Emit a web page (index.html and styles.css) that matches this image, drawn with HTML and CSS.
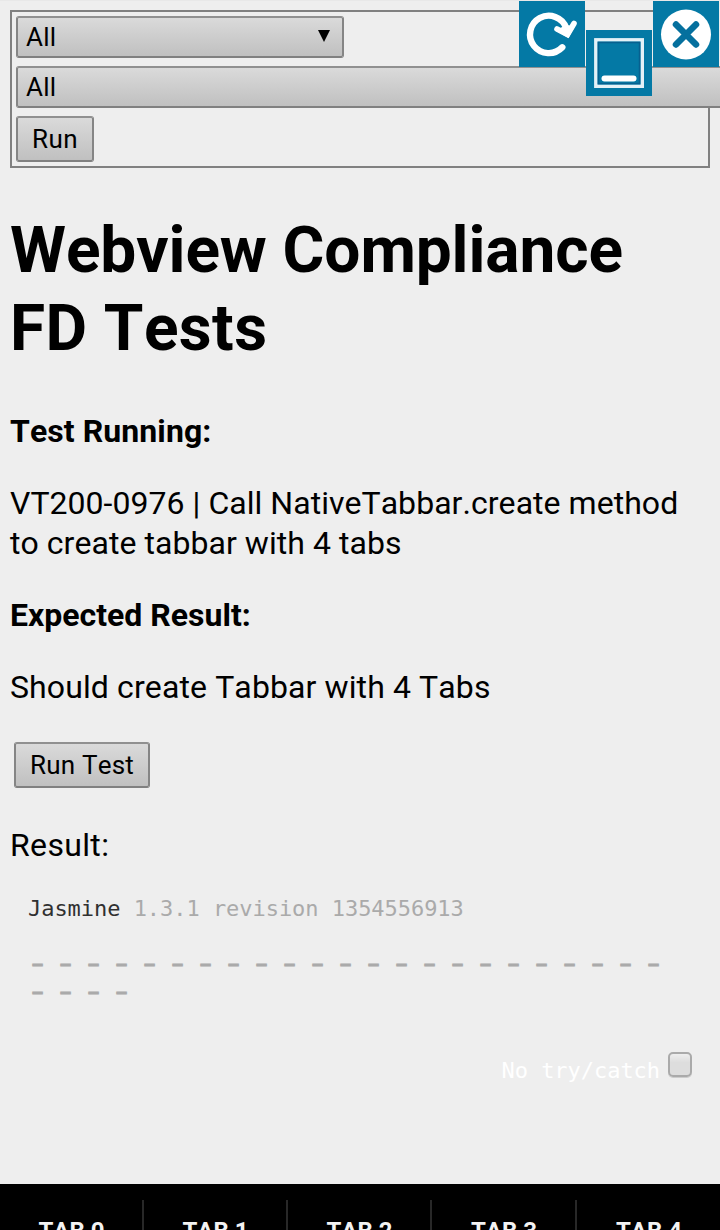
FILE: index.html
```html
<!DOCTYPE html>
<html lang="en">
<head>
<meta charset="utf-8">
<title>Webview Compliance FD Tests</title>
<link rel="stylesheet" href="styles.css">
</head>
<body>
<main class="page">
  <section class="filters">
    <div class="control select select-short"><span>All</span><svg class="arrow" viewBox="0 0 12 12"><path d="M0 0H12L6 12Z"/></svg></div>
    <div class="control select select-long"><span>All</span></div>
    <button class="control button run">Run</button>
  </section>
  <h1 class="title"><span class="title-a">Webview Compliance</span><br><span class="title-b">FD Tests</span></h1>
  <h2 class="label label-test">Test Running:</h2>
  <p class="text"><span class="line-a">VT200-0976 | Call NativeTabbar.create method</span><br><span class="line-b">to create tabbar with 4 tabs</span></p>
  <h2 class="label label-expected">Expected Result:</h2>
  <p class="text"><span class="line-c">Should create Tabbar with 4 Tabs</span></p>
  <button class="control button run-test">Run Test</button>
  <p class="text result">Result:</p>
  <section class="reporter">
    <div class="banner">Jasmine <span class="version">1.3.1 revision 1354556913</span></div>
    <ul class="symbols">
      <li>–</li><li>–</li><li>–</li><li>–</li><li>–</li><li>–</li><li>–</li><li>–</li><li>–</li>
      <li>–</li><li>–</li><li>–</li><li>–</li><li>–</li><li>–</li><li>–</li><li>–</li><li>–</li>
      <li>–</li><li>–</li><li>–</li><li>–</li><li>–</li><li>–</li><li>–</li><li>–</li><li>–</li>
    </ul>
    <div class="options"><span>No try/catch</span><span class="checkbox"></span></div>
  </section>
</main>
<nav class="tabs">
  <div class="tab">TAB 0</div><div class="tab">TAB 1</div><div class="tab">TAB 2</div><div class="tab">TAB 3</div><div class="tab">TAB 4</div>
</nav>
<div class="overlay">
  <svg class="tool" viewBox="0 0 66 66"><rect width="66" height="66" fill="#0479a5"/><path d="M43.300 46.300A18.700 18.700 0 1 1 47.300 27" fill="none" stroke="#fff" stroke-width="6.400" stroke-linecap="round"/><path d="M38 28L48.500 33.500L55 22.500" fill="none" stroke="#fff" stroke-width="5.600" stroke-linecap="round"/><path d="M37 30L49.500 37L56 25L46 24Z" fill="#fff"/></svg>
  <svg class="tool tool-low" viewBox="0 0 66 66"><rect width="66" height="66" fill="#0479a5"/><rect x="9.800" y="9.800" width="46.500" height="46.500" fill="none" stroke="#e4f1f7" stroke-width="3.400"/><rect x="12.500" y="12.500" width="41" height="41" fill="none" stroke="#07608f" stroke-width="1.500"/><path d="M18.500 48.500H47.500" stroke="#fff" stroke-width="6" stroke-linecap="round"/></svg>
  <svg class="tool" viewBox="0 0 66 66"><rect width="66" height="66" fill="#0479a5"/><circle cx="33" cy="33.500" r="25" fill="#fff"/><path d="M23 23.500L43 43.500M43 23.500L23 43.500" stroke="#05709e" stroke-width="6.500" stroke-linecap="round"/></svg>
</div>
</body>
</html>
```
FILE: styles.css
```css
* { box-sizing: border-box; }
html { background: #eee; }
body { margin: 0; width: 720px; height: 1230px; overflow: hidden; position: relative; display: flex; flex-direction: column; background: #eee; color: #000; font-family: Roboto, sans-serif; font-kerning: none; border-top: 1px solid #e8e8e8; }
.page { flex: none; height: 1183px; padding: 9px 10px 0; }
.filters { height: 158px; border: 2px solid #808080; padding: 4px; display: flex; flex-direction: column; align-items: flex-start; gap: 8px; }
.control { flex: none; display: flex; align-items: center; border: 2px solid; border-color: #909090 #858585 #808080 #858585; border-radius: 3px; background: linear-gradient(#dadada, #c0c0c0); font: 26px/30px Roboto, sans-serif; font-kerning: none; color: #000; }
.select { height: 42px; padding: 0 12px 0 8px; justify-content: space-between; letter-spacing: 0.2px; }
.select-short { width: 328px; }
.select-long { width: 704px; border-right: 0; border-radius: 3px 0 0 3px; }
.arrow { width: 12px; height: 12px; margin-top: -2px; }
.button { height: 46px; padding: 0; justify-content: center; }
.run { width: 78px; letter-spacing: 0.5px; }
.run-test { width: 136px; margin: 35px 0 0 4px; letter-spacing: 0.2px; }
.title { margin: 44px 0 0; font-size: 64px; line-height: 78px; font-weight: 700; }
.title-a { letter-spacing: -0.1px; }
.title-b { letter-spacing: 0.4px; }
.title span, .text span { white-space: nowrap; }
.label { margin: 44px 0 0; font-size: 32px; line-height: 40px; font-weight: 700; }
.label-test { margin-top: 43px; letter-spacing: 0.08px; }
.label-expected { margin-top: 32px; }
.text { margin: 32px 0 0; font-size: 32px; line-height: 40px; }
.line-a { letter-spacing: 0.04px; }
.line-b { letter-spacing: 0.05px; }
.line-c { letter-spacing: 0.11px; }
.result { margin-top: 37px; letter-spacing: 0.35px; }
.reporter { padding: 0 18px; margin-top: 29px; font-family: "DejaVu Sans Mono", monospace; font-size: 22px; line-height: 30px; letter-spacing: -0.04px; color: #303030; }
.version { color: #aaa; }
.symbols { list-style: none; margin: 25px 0 0; padding: 0; display: flex; flex-wrap: wrap; color: #aaa; }
.symbols li { width: 28px; height: 28px; padding-left: 4px; line-height: 28px; font-family: "Liberation Sans", sans-serif; font-size: 20px; font-weight: 700; -webkit-text-stroke: 0.8px #aaa; }
.options { margin-top: 51px; display: flex; justify-content: flex-end; color: #fff; }
.checkbox { width: 24px; height: 25px; margin: -4px 0 0 8px; border: 2px solid #aaa; border-radius: 5px; background: linear-gradient(#eee, #ddd 40%); box-shadow: 0 1px 0 #ccc; }
.tabs { flex: none; height: 46px; background: #000; display: grid; grid-template-columns: 144px 144px 144px 145px 143px; padding-top: 16px; overflow: hidden; }
.tab { height: 60px; padding: 17px 0 0 1px; border-right: 2px solid #282828; color: #f3f3f3; text-align: center; font-size: 24px; line-height: 28px; font-weight: 700; }
.tab:last-child { border-right: 0; }
.overlay { position: absolute; top: 0; right: 1px; display: flex; gap: 1px; }
.tool { width: 66px; height: 66px; display: block; }
.tool-low { margin-top: 29px; }
```
